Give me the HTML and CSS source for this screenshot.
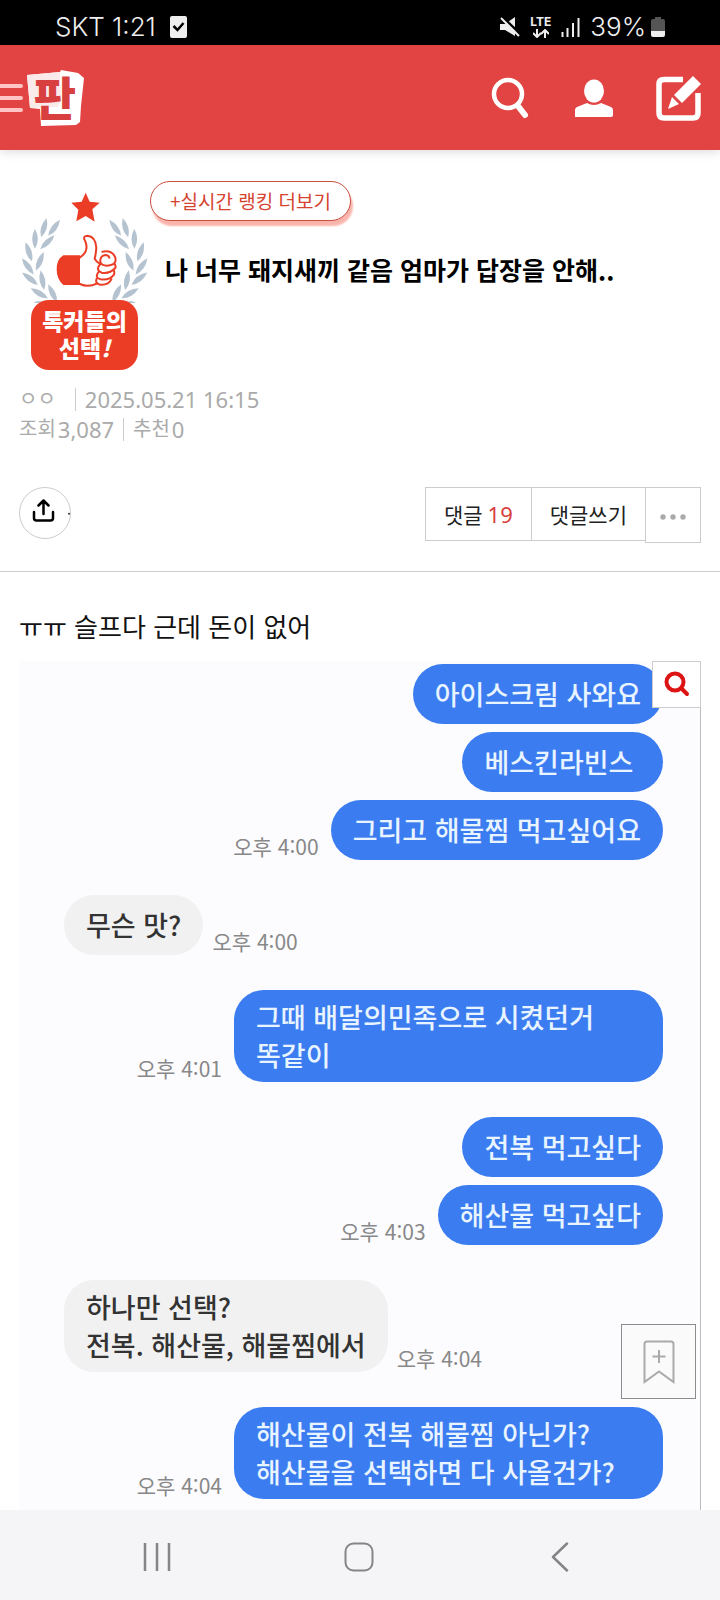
FILE: index.html
```html
<!DOCTYPE html>
<html lang="ko">
<head>
<meta charset="utf-8">
<meta name="viewport" content="width=device-width, initial-scale=1">
<title>나 너무 돼지새끼 같음 엄마가 답장을 안해..</title>
<link rel="stylesheet" href="styles.css">
</head>
<body>
<div class="status">
  <span class="status-text">SKT 1:21</span>
  <svg class="status-check" width="17" height="22" viewBox="0 0 17 22"><rect width="17" height="22" rx="2" fill="#eee"/><path d="M3.500 10l4 4 6-7" fill="none" stroke="#000" stroke-width="2.500"/></svg>
  <div class="status-right">
    <svg width="20" height="20" viewBox="0 0 20 20"><path d="M0 7h5l10-7v19L5 13H0z" fill="#eee"/><path d="M2 0l18 17" stroke="#000" stroke-width="3"/><path d="M1 1l18 18" stroke="#eee" stroke-width="2"/></svg>
    <div class="lte"><span>LTE</span><svg width="16" height="9" viewBox="0 0 16 9" fill="none" stroke="#eee" stroke-width="2"><path d="M4 0v8M0 4l4 4 4-4M12 9V1M8 5l4-4 4 4"/></svg></div>
    <svg width="19" height="20" viewBox="0 0 19 20" stroke="#eee" stroke-width="2"><path d="M1.500 20v-5M6.500 20v-9M12 20V6M17.500 20V1"/></svg>
    <span class="status-text">39%</span>
    <svg class="battery" width="14" height="20" viewBox="0 0 14 20"><path d="M4 0h6v2h2q2 0 2 2v10H0V4q0-2 2-2h2z" fill="#555"/><path d="M0 14h14v4q0 2-2 2H2q-2 0-2-2z" fill="#eee"/></svg>
  </div>
</div>

<header class="topbar">
  <button class="icon-btn" aria-label="메뉴"><svg width="23" height="28" viewBox="0 0 23 28" stroke="#ffc4c4" stroke-width="4" stroke-linecap="round"><path d="M-2 2h23M-2 14h23M-2 26h23"/></svg></button>
  <a class="logo" href="#" aria-label="판">
    <svg width="60" height="58" viewBox="0 0 60 58">
      <path d="M1 6l33-3 1-2 17 3 6 5-3 28-1 16-4 3-35 1-1-17-10-1z" fill="#fff"/>
      <path d="M1 6l33-3 1 28-3 7-28 1z" fill="#faeaea"/>
      <text x="29" y="46" text-anchor="middle" class="logo-text">판</text>
    </svg>
  </a>
  <nav class="tools">
    <button class="icon-btn" aria-label="검색"><svg width="40" height="46" viewBox="0 0 40 46" fill="none" stroke="#fff"><circle cx="17" cy="19" r="14" stroke-width="4.500"/><path d="M27 31l7 9" stroke-width="6" stroke-linecap="round"/></svg></button>
    <button class="icon-btn" aria-label="내 정보"><svg width="39" height="46" viewBox="0 0 39 46" fill="#fff"><ellipse cx="20" cy="16" rx="10" ry="11.500"/><path d="M1 42v-7q0-2 2-3l10-4q7 4 14 0l10 4q2 1 2 3v5q0 2-2 2z"/></svg></button>
    <button class="icon-btn" aria-label="글쓰기"><svg width="45" height="46" viewBox="0 0 45 46"><path d="M27 4.500H8Q3 4.500 3 9v29q0 5 5 5h29q5 0 5-5V18" fill="none" stroke="#fff" stroke-width="5.500"/><path d="M16 23L37-2l10 9-23 28-11 1z" fill="#e24444"/><path d="M37 1l8 8-19 19-8-8zM16 22l7 7-11 5z" fill="#fff"/></svg></button>
  </nav>
</header>

<main>
  <section class="post-head">
    <div class="headline">
      <div class="badge">
        <svg class="laurel" width="130" height="113" viewBox="60 90 390 339">
          <defs>
            <path id="leaf" d="M0 2Q17-26 0-58Q-17-26 0 2z"/>
            <g id="branch" fill="#b5c3d0">
              <use href="#leaf" transform="translate(124 230) rotate(16)"/>
              <use href="#leaf" transform="translate(146 226) rotate(36)"/>
              <use href="#leaf" transform="translate(105 264) rotate(0)"/>
              <use href="#leaf" transform="translate(122 266) rotate(46)"/>
              <use href="#leaf" transform="translate(95 302) rotate(-18)"/>
              <use href="#leaf" transform="translate(109 330) rotate(22)"/>
              <use href="#leaf" transform="translate(112 373) rotate(-52)"/>
              <use href="#leaf" transform="translate(100 342) rotate(-36)"/>
              <use href="#leaf" transform="translate(132 388) rotate(-10)"/>
              <use href="#leaf" transform="translate(142 414) rotate(-60)"/>
              <use href="#leaf" transform="translate(170 425) rotate(-26)"/>
              <path d="M100 429q16-12 32 0z"/>
            </g>
          </defs>
          <use href="#branch"/>
          <use href="#branch" transform="translate(508 0) scale(-1 1)"/>
          <path d="M257 98l12 27 30 3-22 20 7 37-27-17-28 16 6-35-21-21 31-3z" fill="#eb3d26"/>
          <path d="M240 286h-50q-20 12-20 42t20 47h50z" fill="#eb3d26"/>
          <g fill="#fff" stroke="#eb3d26" stroke-width="6" stroke-linecap="round" stroke-linejoin="round">
            <path stroke="none" d="M240 292L286 292Q294 274 318 273Q350 278 346 298L343 330L332 356L302 372L240 372z"/>
            <path d="M240 292Q268 274 256 244Q246 228 262 227Q287 229 289 263Q288 280 284 296Q290 306 298 310M240 372Q264 384 292 370"/>
            <path fill="none" d="M307 275q30-6 39 18q4 20-16 23q-24 4-29-10q-2-18 15-21q10 0 12 8M301 312q-16 18 4 26q24 4 41-14q2-6-2-12M294 338q-10 16 8 20q26 4 40-14q2-6 0-12M290 356q-6 14 10 18q26 2 34-16"/>
          </g>
        </svg>
        <span class="badge-label">톡커들의<br>선택<i>!</i></span>
      </div>
      <div class="headline-text">
        <a class="ranking" href="#">+실시간 랭킹 더보기</a>
        <h1>나 너무 돼지새끼 같음 엄마가 답장을 안해..</h1>
      </div>
    </div>
    <div class="meta">
      <div class="meta-row"><span class="author">ㅇㅇ</span><span class="bar"></span><span>2025.05.21 16:15</span></div>
      <div class="meta-row"><span class="stat"><span class="ko">조회</span>3,087</span><span class="bar"></span><span class="stat"><span class="ko">추천</span>0</span></div>
    </div>
    <div class="actions">
      <button class="share" aria-label="공유"><svg width="52" height="52" viewBox="0 0 52 52" fill="none" stroke="#000" stroke-width="2.500" stroke-linecap="round" stroke-linejoin="round"><path d="M24.500 27V14M19.500 18.500l5-5 5 5M15 25v6q0 2.500 2.500 2.500h14q2.500 0 2.500-2.500v-6"/><path d="M50 26.500v.5" stroke-width="1.500"/></svg></button>
      <div class="btns">
        <a class="btn" href="#"><span>댓글</span><span class="count">19</span></a>
        <a class="btn" href="#">댓글쓰기</a>
        <button class="btn more" aria-label="더보기"><svg width="26" height="6" viewBox="0 0 26 6" fill="#aaa"><circle cx="3" cy="3" r="2.700"/><circle cx="13" cy="3" r="2.700"/><circle cx="23" cy="3" r="2.700"/></svg></button>
      </div>
    </div>
  </section>

  <article class="post-body">
    <p class="lead">ㅠㅠ 슬프다 근데 돈이 없어</p>
    <div class="capture">
      <button class="enlarge" aria-label="확대"><svg width="26" height="26" viewBox="0 0 26 26" fill="none" stroke="#dc1414"><circle cx="11" cy="11" r="8.500" stroke-width="4"/><path d="M18 18l5 5" stroke-width="4" stroke-linecap="round"/></svg></button>
      <div class="group">
        <div class="msg me"><p class="bubble">아이스크림 사와요</p></div>
        <div class="msg me"><p class="bubble">베스킨라빈스&nbsp;</p></div>
        <div class="msg me"><p class="bubble">그리고 해물찜 먹고싶어요</p><time>오후 4:00</time></div>
      </div>
      <div class="group">
        <div class="msg"><p class="bubble">무슨 맛?</p><time>오후 4:00</time></div>
      </div>
      <div class="group">
        <div class="msg me"><p class="bubble multi wide">그때 배달의민족으로 시켰던거<br>똑같이</p><time>오후 4:01</time></div>
      </div>
      <div class="group">
        <div class="msg me"><p class="bubble">전복 먹고싶다</p></div>
        <div class="msg me"><p class="bubble">해산물 먹고싶다</p><time>오후 4:03</time></div>
      </div>
      <div class="group">
        <div class="msg"><p class="bubble multi">하나만 선택?<br>전복. 해산물, 해물찜에서</p><time>오후 4:04</time></div>
      </div>
      <div class="group">
        <div class="msg me"><p class="bubble multi wide">해산물이 전복 해물찜 아닌가?<br>해산물을 선택하면 다 사올건가?</p><time>오후 4:04</time></div>
      </div>
    </div>
  </article>
</main>

<button class="bookmark" aria-label="북마크"><svg width="32" height="44" viewBox="0 0 32 44" fill="none" stroke="#aaa" stroke-width="2"><path d="M1.500 42V4q0-2.500 2.500-2.500h24q2.500 0 2.500 2.500v38L16 31.500zM16 10v13M9.500 16.500h13"/></svg></button>

<nav class="sysnav">
  <button class="icon-btn" aria-label="최근 앱"><svg width="28" height="30" viewBox="0 0 28 30" stroke="#858588" stroke-width="2.500"><path d="M2 1v28M14 1v28M26 1v28"/></svg></button>
  <button class="icon-btn" aria-label="홈"><svg width="30" height="30" viewBox="0 0 30 30" fill="none" stroke="#858588" stroke-width="2"><rect x="1.500" y="1.500" width="27" height="27" rx="8"/></svg></button>
  <button class="icon-btn" aria-label="뒤로"><svg width="28" height="30" viewBox="0 0 28 30" fill="none" stroke="#858588" stroke-width="2.500" stroke-linecap="round" stroke-linejoin="round"><path d="M21 1.500L7 15l14 13.500"/></svg></button>
</nav>
</body>
</html>
```
FILE: styles.css
```css
* { box-sizing: border-box; }
body {
  margin: 0;
  min-height: 100vh;
  display: flex;
  flex-direction: column;
  position: relative;
  background: #fff;
  color: #111;
  font-family: "Noto Sans CJK KR", "Noto Sans", sans-serif;
}
svg { display: block; }
h1, p { margin: 0; }
a { color: inherit; text-decoration: none; }
button { font: inherit; color: inherit; cursor: pointer; }
.icon-btn { padding: 0; border: 0; background: none; }

.status {
  display: flex;
  align-items: center;
  height: 45px;
  padding: 8px 55px 0;
  background: #000;
  color: #eee;
}
.status-text { font: 300 26px/30px Inter, sans-serif; }
.status-check { margin-left: 14px; }
.status-right { display: flex; align-items: center; gap: 10px; margin-left: auto; }
.battery { margin-left: -5px; }
.lte { display: flex; flex-direction: column; align-items: center; gap: 1px; font: 700 12px/12px Inter, sans-serif; }

.topbar {
  display: flex;
  align-items: center;
  height: 105px;
  padding-right: 19px;
  background: #e24444;
  box-shadow: 0 2px 10px rgba(0, 0, 0, 0.14);
}
.logo { margin-left: 3px; }
.logo svg { overflow: visible; }
.logo-text { font: 900 46px "Noto Sans CJK KR", sans-serif; fill: #d83f3f; }
.tools { display: flex; gap: 43px; margin-left: auto; }

.post-head { padding: 31px 19px 28px; border-bottom: 1px solid #ccc; }
.headline { display: flex; }
.badge { display: flex; flex-direction: column; align-items: center; width: 131px; padding-top: 9px; }
.badge-label {
  width: 107px;
  margin-top: -3px;
  padding: 7px 0 9px;
  border-radius: 18px;
  background: #eb3d26;
  color: #fff;
  font-size: 23px;
  font-weight: 900;
  line-height: 27px;
  text-align: center;
}
.headline-text { display: flex; flex-direction: column; align-items: flex-start; gap: 30px; }
.ranking {
  padding: 0 19px;
  border: 1px solid #c8503f;
  border-radius: 20px;
  box-shadow: 2px 5px 2px #f9b5ac;
  background: #fff;
  color: #d5442f;
  font-size: 19px;
  line-height: 38px;
}
h1 { margin-left: 15px; color: #000; font-size: 25px; line-height: 36px; font-weight: 700; }

.meta { margin-top: 14px; color: #aaa; font: 22px/30px "Noto Sans", "Noto Sans CJK KR", sans-serif; }
.meta-row { display: flex; align-items: center; height: 30px; gap: 9px; }
.stat { display: flex; gap: 2px; }
.author, .ko { font-size: 20px; }
.author { margin-right: 10px; }
.bar { width: 1px; height: 23px; background: #ccc; }

.actions { display: flex; justify-content: space-between; align-items: flex-start; margin-top: 43px; }
.share { padding: 0; width: 52px; height: 52px; border: 1px solid #ccc; border-radius: 50%; background: #fff; }
.share svg { margin: -1px; }
.btns { display: flex; align-items: flex-start; }
.btn {
  display: flex;
  align-items: center;
  gap: 5px;
  height: 54px;
  padding: 0 18px;
  border: 1px solid #ccc;
  background: #fff;
  color: #222;
  font-size: 21px;
}
.btn + .btn { margin-left: -1px; }
.more { height: 56px; padding: 4px 14px 0; }
.count { color: #d84040; font: 22px "Noto Sans", sans-serif; }

.post-body { padding: 36px 19px 0; }
.lead { font-size: 26px; line-height: 36px; }
.capture {
  position: relative;
  display: flex;
  flex-direction: column;
  gap: 35px;
  margin-top: 17px;
  padding: 3px 37px 11px 45px;
  border-right: 1px solid #bbb;
  background: #fcfcff;
}
.enlarge {
  position: absolute;
  top: 0;
  right: -1px;
  display: flex;
  justify-content: center;
  width: 49px;
  height: 47px;
  padding: 9px 0 0;
  border: 1px solid #ccc;
  background: #fff;
}
.group { display: flex; flex-direction: column; gap: 8px; }
.msg { display: flex; align-items: flex-end; gap: 9px; }
.me { flex-direction: row-reverse; gap: 12px; }
.bubble {
  padding: 11px 22px;
  border-radius: 30px;
  background: #f1f1f1;
  color: #333;
  font-size: 27px;
  font-weight: 500;
  line-height: 38px;
}
.me .bubble { background: #3b7cf0; color: #e8f4ff; }
.multi { padding: 8px 22px; }
.wide { width: 429px; }
time { color: #888; font-size: 21px; line-height: 28px; }

.bookmark {
  position: absolute;
  right: 24px;
  bottom: 201px;
  display: flex;
  align-items: center;
  justify-content: center;
  width: 75px;
  height: 75px;
  padding: 0;
  border: 1px solid #8c8c90;
  background: #fafafb;
}
.sysnav {
  display: flex;
  flex: 1;
  align-items: center;
  justify-content: space-between;
  min-height: 90px;
  padding: 4px 146px 0 143px;
  background: #f5f5f8;
}
```
